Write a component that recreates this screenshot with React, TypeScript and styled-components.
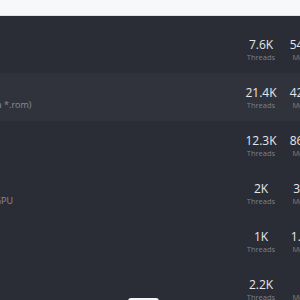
import React from "react";
import styled, { createGlobalStyle } from "styled-components";

const Global = createGlobalStyle`
  html, body { margin: 0; padding: 0; background: #2a2d35; }
  body { font-family: "Open Sans", "Noto Sans", sans-serif; overflow: hidden; }
`;

const Page = styled.div`
  width: 300px;
  height: 300px;
  overflow: hidden;
  position: relative;
  background: #2a2d35;
`;

const TopBar = styled.div`
  height: 15px;
  background: #f7f8fa;
  border-bottom: 1px solid #dfe2e6;
`;

const Viewport = styled.div`
  overflow: hidden;
  padding-top: 9px;
`;

const List = styled.div`
  width: 460px;
  margin-left: -76px;
  display: flex;
  flex-direction: column;
`;

const Row = styled.div<{ $active?: boolean }>`
  height: 48px;
  display: flex;
  align-items: center;
  padding: 0 14px 0 20px;
  background: ${(p) => (p.$active ? "#30333c" : "transparent")};
`;

const Info = styled.div`
  flex: 1;
  display: flex;
  flex-direction: column;
  gap: 2px;
  padding-top: 14px;
`;

const Sub = styled.div`
  font-size: 9px;
  color: #8a8d97;
  white-space: nowrap;
`;

const Stats = styled.div`
  display: flex;
  gap: 12px;
`;

const Stat = styled.div`
  width: 34px;
  display: flex;
  flex-direction: column;
  align-items: center;
`;

const Value = styled.div`
  font-size: 12px;
  line-height: 15px;
  font-weight: 500;
  color: #e6e7eb;
  white-space: nowrap;
`;

const Label = styled.div`
  font-size: 7.5px;
  line-height: 10px;
  color: #7c7f89;
`;

const Pill = styled.div`
  position: absolute;
  left: 128px;
  top: 298px;
  width: 31px;
  height: 10px;
  border-radius: 3px;
  background: #f4f5f7;
`;

const rows = [
  { sub: "", threads: "7.6K", mem: "54.2M" },
  { sub: "Boot image (a *.rom)", threads: "21.4K", mem: "42.8M", active: true },
  { sub: "", threads: "12.3K", mem: "86.1M" },
  { sub: "Integrated vGPU", threads: "2K", mem: "3.4M" },
  { sub: "", threads: "1K", mem: "1.25G" },
  { sub: "", threads: "2.2K", mem: "0" },
];

export default function App() {
  return (
    <>
      <Global />
      <Page>
        <TopBar />
        <Viewport>
          <List>
            {rows.map((r, i) => (
              <Row key={i} $active={r.active}>
                <Info>
                  <Sub>{r.sub}</Sub>
                </Info>
                <Stats>
                  <Stat>
                    <Value>{r.threads}</Value>
                    <Label>Threads</Label>
                  </Stat>
                  <Stat>
                    <Value>{r.mem}</Value>
                    <Label>Memory</Label>
                  </Stat>
                  <Stat>
                    <Value>0</Value>
                    <Label>Ports</Label>
                  </Stat>
                </Stats>
              </Row>
            ))}
          </List>
        </Viewport>
        <Pill />
      </Page>
    </>
  );
}
